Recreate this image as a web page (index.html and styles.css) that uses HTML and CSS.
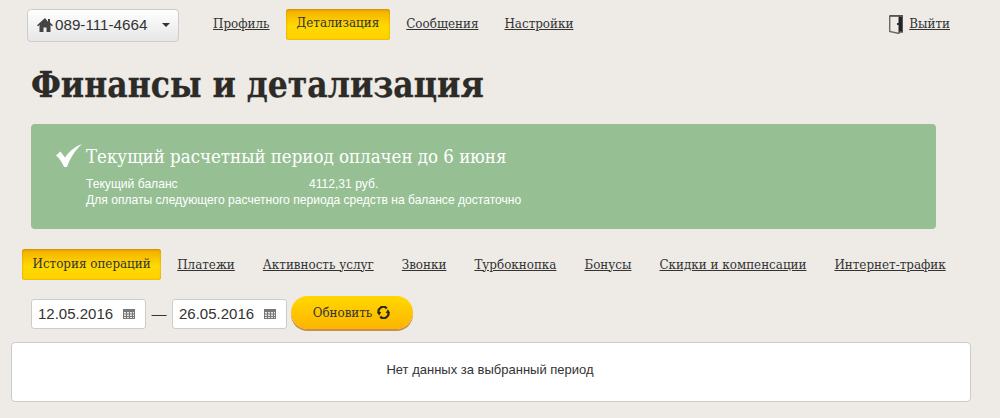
FILE: index.html
```html
<!DOCTYPE html>
<html lang="ru">
<head>
<meta charset="utf-8">
<title>Финансы и детализация</title>
<link rel="stylesheet" href="styles.css">
</head>
<body>
<header class="topbar">
  <button class="account" type="button">
    <svg class="home" viewBox="0 0 16 14" width="16" height="14"><path d="M8 0 0 7.200l.9 1L2.500 6.900V14h4V9.500h3V14h4V6.900l1.600 1.300.9-1-3-2.700V1h-2v2.700z" fill="#444"/></svg>
    <span class="account-number">089-111-4664</span>
    <span class="caret"></span>
  </button>
  <nav class="mainnav">
    <a class="link" href="#">Профиль</a>
    <a class="link pill" href="#">Детализация</a>
    <a class="link" href="#">Сообщения</a>
    <a class="link" href="#">Настройки</a>
  </nav>
  <a class="logout" href="#">
    <svg viewBox="0 0 14 19" width="14" height="19"><path d="M.7 1v15.500l9.300 2V1z" fill="none" stroke="#666" stroke-width="1.400"/><path d="M1 .7h12.500V17H10" fill="none" stroke="#555" stroke-width="1.400"/><path d="M10 1.500h3V16.500h-3z" fill="#222"/><rect x="8" y="8" width="2" height="2" fill="#333"/></svg>
    <span class="link">Выйти</span>
  </a>
</header>

<h1 class="title">Финансы и детализация</h1>

<section class="status">
  <svg class="check" viewBox="0 0 26 23" width="26" height="23"><path d="M0 11.500 4.500 7.500l4.500 6C13 8 18 3 26 0 19.500 6 14.500 13 11 23H8C6 18 3.500 14.500 0 11.500z" fill="#fff"/></svg>
  <div class="status-body">
    <h2 class="status-title">Текущий расчетный период оплачен до 6 июня</h2>
    <div class="balance"><span class="balance-label">Текущий баланс</span><span>4112,31 руб.</span></div>
    <p class="status-note">Для оплаты следующего расчетного периода средств на балансе достаточно</p>
  </div>
</section>

<nav class="tabs">
  <a class="link pill" href="#">История операций</a>
  <a class="link" href="#">Платежи</a>
  <a class="link" href="#">Активность услуг</a>
  <a class="link" href="#">Звонки</a>
  <a class="link" href="#">Турбокнопка</a>
  <a class="link" href="#">Бонусы</a>
  <a class="link" href="#">Скидки и компенсации</a>
  <a class="link" href="#">Интернет-трафик</a>
</nav>

<form class="filter">
  <div class="date"><span>12.05.2016</span>
    <svg viewBox="0 0 12 10" width="12" height="10"><path d="M0 0h12v10H0z" fill="#777"/><path fill="#e8e8e8" d="M1 3h2v1.500H1zM4 3h2v1.500H4zM7 3h2v1.500H7zM10 3h1v1.500h-1zM1 5.500h2V7H1zM4 5.500h2V7H4zM7 5.500h2V7H7zM10 5.500h1V7h-1zM1 8h2v1H1zM4 8h2v1H4zM7 8h2v1H7zM10 8h1v1h-1z"/></svg>
  </div>
  <span class="dash">—</span>
  <div class="date"><span>26.05.2016</span>
    <svg viewBox="0 0 12 10" width="12" height="10"><path d="M0 0h12v10H0z" fill="#777"/><path fill="#e8e8e8" d="M1 3h2v1.500H1zM4 3h2v1.500H4zM7 3h2v1.500H7zM10 3h1v1.500h-1zM1 5.500h2V7H1zM4 5.500h2V7H4zM7 5.500h2V7H7zM10 5.500h1V7h-1zM1 8h2v1H1zM4 8h2v1H4zM7 8h2v1H7zM10 8h1v1h-1z"/></svg>
  </div>
  <button class="refresh" type="button">Обновить
    <svg viewBox="0 0 14 14" width="13" height="13"><path d="M10.500 2.600A5 5 0 0 0 2.200 8" fill="none" stroke="#2a2a1a" stroke-width="2.400"/><path d="M0 6.500h4.600L2.300 10.500z" fill="#2a2a1a"/><path d="M3.500 11.400A5 5 0 0 0 11.800 6" fill="none" stroke="#2a2a1a" stroke-width="2.400"/><path d="M14 7.500H9.400l2.300-4z" fill="#2a2a1a"/></svg>
  </button>
</form>

<section class="result">Нет данных за выбранный период</section>
</body>
</html>
```

FILE: styles.css
```css
* { box-sizing: border-box; }
html, body { height: 100%; }
body {
  margin: 0;
  overflow: hidden;
  background: #eeebe7;
  color: #333;
  font-family: "Liberation Sans", Arial, sans-serif;
}
.link {
  color: #333;
  font-family: "DejaVu Serif Condensed", "Liberation Serif", serif;
  font-size: 13.25px;
  line-height: 16px;
  text-decoration: underline;
  white-space: nowrap;
}
.pill {
  display: block;
  padding: 7px 10px 8px;
  border-radius: 3px;
  background: linear-gradient(#f2ad00, #ffd900 55%, #fdd200);
  box-shadow: inset 0 1px 2px #c98f00, inset 0 -1px 1px #f3c200;
  text-decoration: none;
}
.topbar {
  display: flex;
  align-items: flex-start;
  padding: 9px 50px 0 27px;
  height: 52px;
}
.account {
  display: flex;
  align-items: center;
  width: 152px;
  height: 33px;
  padding: 0 8px 2px 9px;
  border: 1px solid #ccc;
  border-radius: 4px;
  background: linear-gradient(#fff, #e6e6e6);
  color: #333;
  font: 15.2px "Liberation Sans", Arial, sans-serif;
}
.home { flex: none; margin-right: 2px; }
.account-number { flex: 1; text-align: left; }
.caret {
  border-left: 4px solid transparent;
  border-right: 4px solid transparent;
  border-top: 4px solid #333;
}
.mainnav {
  display: flex;
  align-items: center;
  height: 31px;
  margin-left: 34px;
  gap: 16px;
}
.mainnav .link { margin-bottom: 2px; }
.mainnav .pill { margin-bottom: 0; padding: 6px 11px 9px; }
.mainnav .link:nth-child(4) { margin-left: 10px; }
.logout {
  display: flex;
  align-items: center;
  gap: 6px;
  height: 31px;
  margin-left: auto;
  text-decoration: none;
}
.logout .link { margin-bottom: 2px; }
.title {
  margin: 0;
  padding-left: 31px;
  color: #2d2b28;
  font-family: "DejaVu Serif Condensed", "Liberation Serif", serif;
  font-size: 35px;
  font-weight: 700;
  line-height: 66px;
  height: 72px;
  -webkit-text-stroke: 0.3px #2d2b28;
}
.status {
  display: flex;
  width: 905px;
  height: 105px;
  margin-left: 31px;
  padding: 20px 25px 0;
  border-radius: 4px;
  background: #96c093;
  color: #fff;
}
.check { flex: none; margin-right: 4px; }
.status-title {
  margin: 1px 0 7px;
  font-family: "DejaVu Serif Condensed", "Liberation Serif", serif;
  font-size: 18.5px;
  font-weight: 400;
  line-height: 24px;
}
.balance, .status-note {
  margin: 0;
  font-size: 12.1px;
  line-height: 16px;
}
.balance { display: flex; }
.balance-label { width: 223px; }
.tabs {
  display: flex;
  align-items: center;
  gap: 28px;
  height: 31px;
  margin: 20px 0 0 22px;
}
.tabs .pill { margin-right: -12px; padding: 7px 10.5px 8px; }
.filter {
  display: flex;
  align-items: flex-start;
  margin: 16px 0 0 31px;
  height: 46px;
}
.date {
  display: flex;
  align-items: center;
  justify-content: space-between;
  width: 115px;
  height: 30px;
  margin-top: 3px;
  padding: 0 10px 1px 6px;
  border: 1px solid #ccc;
  border-radius: 3px;
  background: #fff;
  font-size: 15px;
}
.dash { width: 26px; margin-top: 3px; font-size: 15px; line-height: 30px; text-align: center; }
.refresh {
  display: flex;
  align-items: center;
  justify-content: center;
  gap: 5px;
  width: 122px;
  height: 33px;
  margin-left: 4px;
  padding: 0 1px 0 0;
  border: 0;
  border-radius: 17px;
  background: linear-gradient(#ffd800, #fdb400);
  box-shadow: 0 2px 0 #c98d4f, 0 1px 0 #f7e2b0;
  color: #333;
  font-family: "DejaVu Serif Condensed", "Liberation Serif", serif;
  font-size: 13.2px;
}
.result {
  width: 960px;
  height: 60px;
  margin-left: 11px;
  padding: 19px 2px 0 0;
  border: 1px solid #ccc;
  border-radius: 4px;
  background: #fff;
  font-size: 13px;
  line-height: 16px;
  text-align: center;
}
```
